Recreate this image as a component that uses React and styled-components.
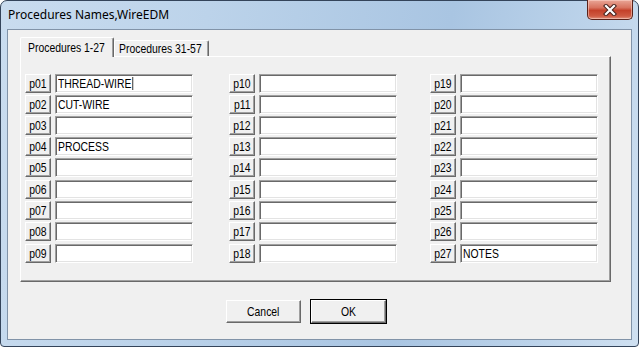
import React from "react";
import styled, { createGlobalStyle } from "styled-components";

const DIALOG_FONT = `"Liberation Sans", Arial, sans-serif`;

const names = { 1: "THREAD-WIRE", 2: "CUT-WIRE", 4: "PROCESS", 27: "NOTES" };

const columns = [0, 1, 2].map((c) =>
  Array.from({ length: 9 }, (_, i) => c * 9 + i + 1)
);

const pad = (n) => `p${String(n).padStart(2, "0")}`;

const App = () => {
  return (
    <>
      <GlobalStyle />
      <Window>
        <TitleBar>
          <Title>Procedures Names,WireEDM</Title>
          <CloseButton aria-label="Close">
            <svg width="16" height="12" viewBox="0 0 16 12">
              <path
                d="M4 2 L12 10 M12 2 L4 10"
                stroke="#47231d"
                strokeWidth="4.2"
                strokeLinecap="square"
                fill="none"
              />
              <path
                d="M4 2 L12 10 M12 2 L4 10"
                stroke="#ffffff"
                strokeWidth="2.2"
                strokeLinecap="square"
                fill="none"
              />
            </svg>
          </CloseButton>
        </TitleBar>
        <Client>
          <TabStrip>
            <Tab $active $width={94}>
              <Label>Procedures 1-27</Label>
            </Tab>
            <Tab $width={95}>
              <Label>Procedures 31-57</Label>
            </Tab>
          </TabStrip>
          <Panel>
            <Grid>
              {columns.map((col, ci) => (
                <Column key={ci}>
                  {col.map((n, i) => (
                    <Row key={n} $spaced={i === 5 || i === 8}>
                      <SmallButton>
                        <Label $center>{pad(n)}</Label>
                      </SmallButton>
                      <Field>
                        <Label>
                          {names[n]}
                          {n === 1 && <Caret />}
                        </Label>
                      </Field>
                    </Row>
                  ))}
                </Column>
              ))}
            </Grid>
          </Panel>
          <Footer>
            <DialogButton>
              <Label $center>Cancel</Label>
            </DialogButton>
            <DialogButton $default>
              <Label $center>OK</Label>
            </DialogButton>
          </Footer>
        </Client>
      </Window>
    </>
  );
};

const GlobalStyle = createGlobalStyle`
  html, body {
    margin: 0;
    padding: 0;
    background: #ffffff;
  }
  body {
    width: 639px;
    height: 347px;
    overflow: hidden;
  }
`;

const Window = styled.div`
  box-sizing: border-box;
  width: 639px;
  height: 347px;
  display: flex;
  flex-direction: column;
  padding: 0 6px 6px 6px;
  border: 1px solid #34445a;
  border-radius: 7px 7px 4px 4px;
  background: linear-gradient(
    100deg,
    #c9dcef 0%,
    #bcd3ea 30%,
    #a9c5e2 65%,
    #bcd3ea 85%,
    #cfe0f1 100%
  );
`;

const TitleBar = styled.div`
  height: 28px;
  display: flex;
  align-items: flex-start;
  justify-content: space-between;
`;

const Title = styled.div`
  padding: 6px 0 0 1px;
  font-family: "Noto Sans", "Open Sans", sans-serif;
  font-size: 12px;
  line-height: 16px;
  color: #000000;
`;

const CloseButton = styled.div`
  box-sizing: border-box;
  width: 46px;
  height: 20px;
  margin: -1px -1px 0 0;
  display: flex;
  align-items: center;
  justify-content: center;
  border: 1px solid #5a2219;
  border-top: 0;
  border-radius: 0 0 5px 5px;
  background: linear-gradient(
    #e9a697 0%,
    #d8735f 40%,
    #c4412a 55%,
    #cf5b43 85%,
    #e0937f 100%
  );
  box-shadow: inset 0 0 0 1px rgba(255, 220, 210, 0.5);
`;

const Client = styled.div`
  flex: 1;
  display: flex;
  flex-direction: column;
  padding: 7px 20px 0 12px;
  border: 1px solid #8193a8;
  background: #f0f0f0;
  font-family: ${DIALOG_FONT};
  font-size: 13px;
  color: #000000;
`;

/* the dialog font is a tall, narrow bitmap face: squeeze Arial metrics to match */
const Label = styled.span`
  display: inline-block;
  white-space: nowrap;
  transform: scaleX(0.8);
  transform-origin: ${(p) => (p.$center ? "center" : "left")};
`;

const TabStrip = styled.div`
  height: 19px;
  display: flex;
  align-items: flex-end;
  position: relative;
  z-index: 1;
`;

const Tab = styled.div`
  box-sizing: border-box;
  width: ${(p) => p.$width}px;
  height: ${(p) => (p.$active ? 20 : 16)}px;
  margin-bottom: ${(p) => (p.$active ? -1 : 0)}px;
  padding: ${(p) => (p.$active ? "2px 0 0 7px" : "0 0 0 4px")};
  display: flex;
  align-items: flex-start;
  line-height: 15px;
  background: #f0f0f0;
  border-top: 1px solid #ffffff;
  border-left: 1px solid #ffffff;
  border-right: 1px solid #696969;
  box-shadow: inset -1px 0 #a0a0a0;
  border-radius: 2px 2px 0 0;
`;

const Panel = styled.div`
  box-sizing: border-box;
  height: 226px;
  padding: 17px 0 0 4px;
  border-top: 1px solid #ffffff;
  border-left: 1px solid #ffffff;
  border-right: 1px solid #696969;
  border-bottom: 1px solid #696969;
  box-shadow: inset -1px -1px #a0a0a0;
`;

const Grid = styled.div`
  display: grid;
  grid-template-columns: 204px 201px 1fr;
`;

const Column = styled.div`
  display: flex;
  flex-direction: column;
  gap: 2px;
`;

const Row = styled.div`
  display: flex;
  gap: 4px;
  margin-top: ${(p) => (p.$spaced ? 1 : 0)}px;
`;

const raised = `
  border-top: 1px solid #ffffff;
  border-left: 1px solid #ffffff;
  border-right: 1px solid #696969;
  border-bottom: 1px solid #696969;
  box-shadow: inset -1px -1px #a0a0a0;
  background: #f0f0f0;
`;

const SmallButton = styled.div`
  box-sizing: border-box;
  width: 26px;
  height: 19px;
  ${raised}
  display: flex;
  align-items: center;
  justify-content: center;
  line-height: 17px;
`;

const Field = styled.div`
  box-sizing: border-box;
  width: 138px;
  height: 19px;
  padding: 0 0 0 2px;
  display: flex;
  align-items: center;
  background: #ffffff;
  border-top: 1px solid #a0a0a0;
  border-left: 1px solid #a0a0a0;
  border-right: 1px solid #ffffff;
  border-bottom: 1px solid #ffffff;
  box-shadow: inset 1px 1px #696969, inset -1px -1px #e3e3e3;
  line-height: 17px;
`;

const Caret = styled.span`
  display: inline-block;
  width: 1px;
  height: 13px;
  margin-left: 1px;
  vertical-align: -2px;
  background: #000000;
`;

const Footer = styled.div`
  display: flex;
  gap: 10px;
  margin-top: 18px;
  padding-left: 206px;
`;

const DialogButton = styled.div`
  box-sizing: border-box;
  width: 75px;
  height: 23px;
  ${raised}
  ${(p) =>
    p.$default &&
    `
    outline: 1px solid #000000;
  `}
  display: flex;
  align-items: center;
  justify-content: center;
`;

export default App;
